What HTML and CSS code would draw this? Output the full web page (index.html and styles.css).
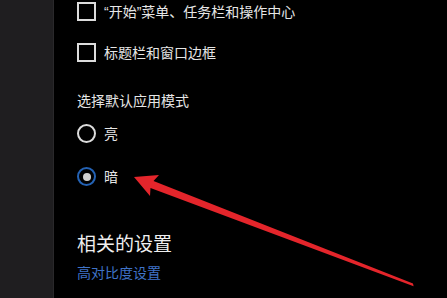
FILE: index.html
```html
<!DOCTYPE html>
<html lang="zh-CN">
<head>
<meta charset="utf-8">
<link rel="stylesheet" href="styles.css">
</head>
<body>
<div class="page">
  <aside class="sidebar"></aside>
  <main class="main">
    <div class="row row-first"><span class="checkbox"></span><span class="label">“开始”菜单、任务栏和操作中心</span></div>
    <div class="row row-second"><span class="checkbox"></span><span class="label">标题栏和窗口边框</span></div>
    <div class="section-label">选择默认应用模式</div>
    <div class="row radio-row-1"><span class="radio"></span><span class="label">亮</span></div>
    <div class="row radio-row-2"><span class="radio radio-on"><span class="dot"></span></span><span class="label">暗</span></div>
    <h2 class="heading">相关的设置</h2>
    <a class="link">高对比度设置</a>
  </main>
  <svg class="arrow" width="447" height="298" viewBox="0 0 447 298">
    <polygon points="134,177 159,175 153.5,181 413,283.6 413.6,286.2 150.5,188 150,196" fill="#e4252b"/>
  </svg>
</div>
</body>
</html>
```
FILE: styles.css
```css
html, body {
  margin: 0;
  padding: 0;
  background: #000;
}
.page {
  position: relative;
  width: 447px;
  height: 298px;
  overflow: hidden;
  display: flex;
  font-family: "Liberation Sans", "Noto Sans CJK SC", sans-serif;
  color: #e6e6e6;
}
.sidebar {
  width: 53px;
  flex: none;
  background: #1f1e20;
  border-right: 1px solid #2a292b;
}
.main {
  flex: 1;
  display: flex;
  flex-direction: column;
  padding: 2px 0 0 23px;
}
.row {
  display: flex;
  align-items: center;
  height: 19px;
}
.row-second { margin-top: 22px; }
.radio-row-1 { margin-top: 13px; }
.radio-row-2 { margin-top: 24px; }
.checkbox {
  box-sizing: border-box;
  width: 19px;
  height: 19px;
  border: 2px solid #dcdcdc;
  flex: none;
}
.radio {
  box-sizing: border-box;
  width: 19px;
  height: 19px;
  border: 2px solid #dcdcdc;
  border-radius: 50%;
  flex: none;
  display: flex;
  align-items: center;
  justify-content: center;
}
.radio-on {
  border-color: #2462b4;
}
.dot {
  width: 8px;
  height: 8px;
  border-radius: 50%;
  background: #d0d0d0;
}
.label {
  margin-left: 8px;
  font-size: 14px;
  line-height: 20px;
  white-space: nowrap;
}
.section-label {
  margin-top: 29px;
  font-size: 14px;
  line-height: 20px;
}
.heading {
  margin: 46px 0 0;
  font-size: 19px;
  font-weight: normal;
  line-height: 26px;
  color: #efefef;
}
.link {
  margin-top: 5px;
  font-size: 14px;
  line-height: 20px;
  color: #3f73c8;
}
.arrow {
  position: absolute;
  left: 0;
  top: 0;
}
```
